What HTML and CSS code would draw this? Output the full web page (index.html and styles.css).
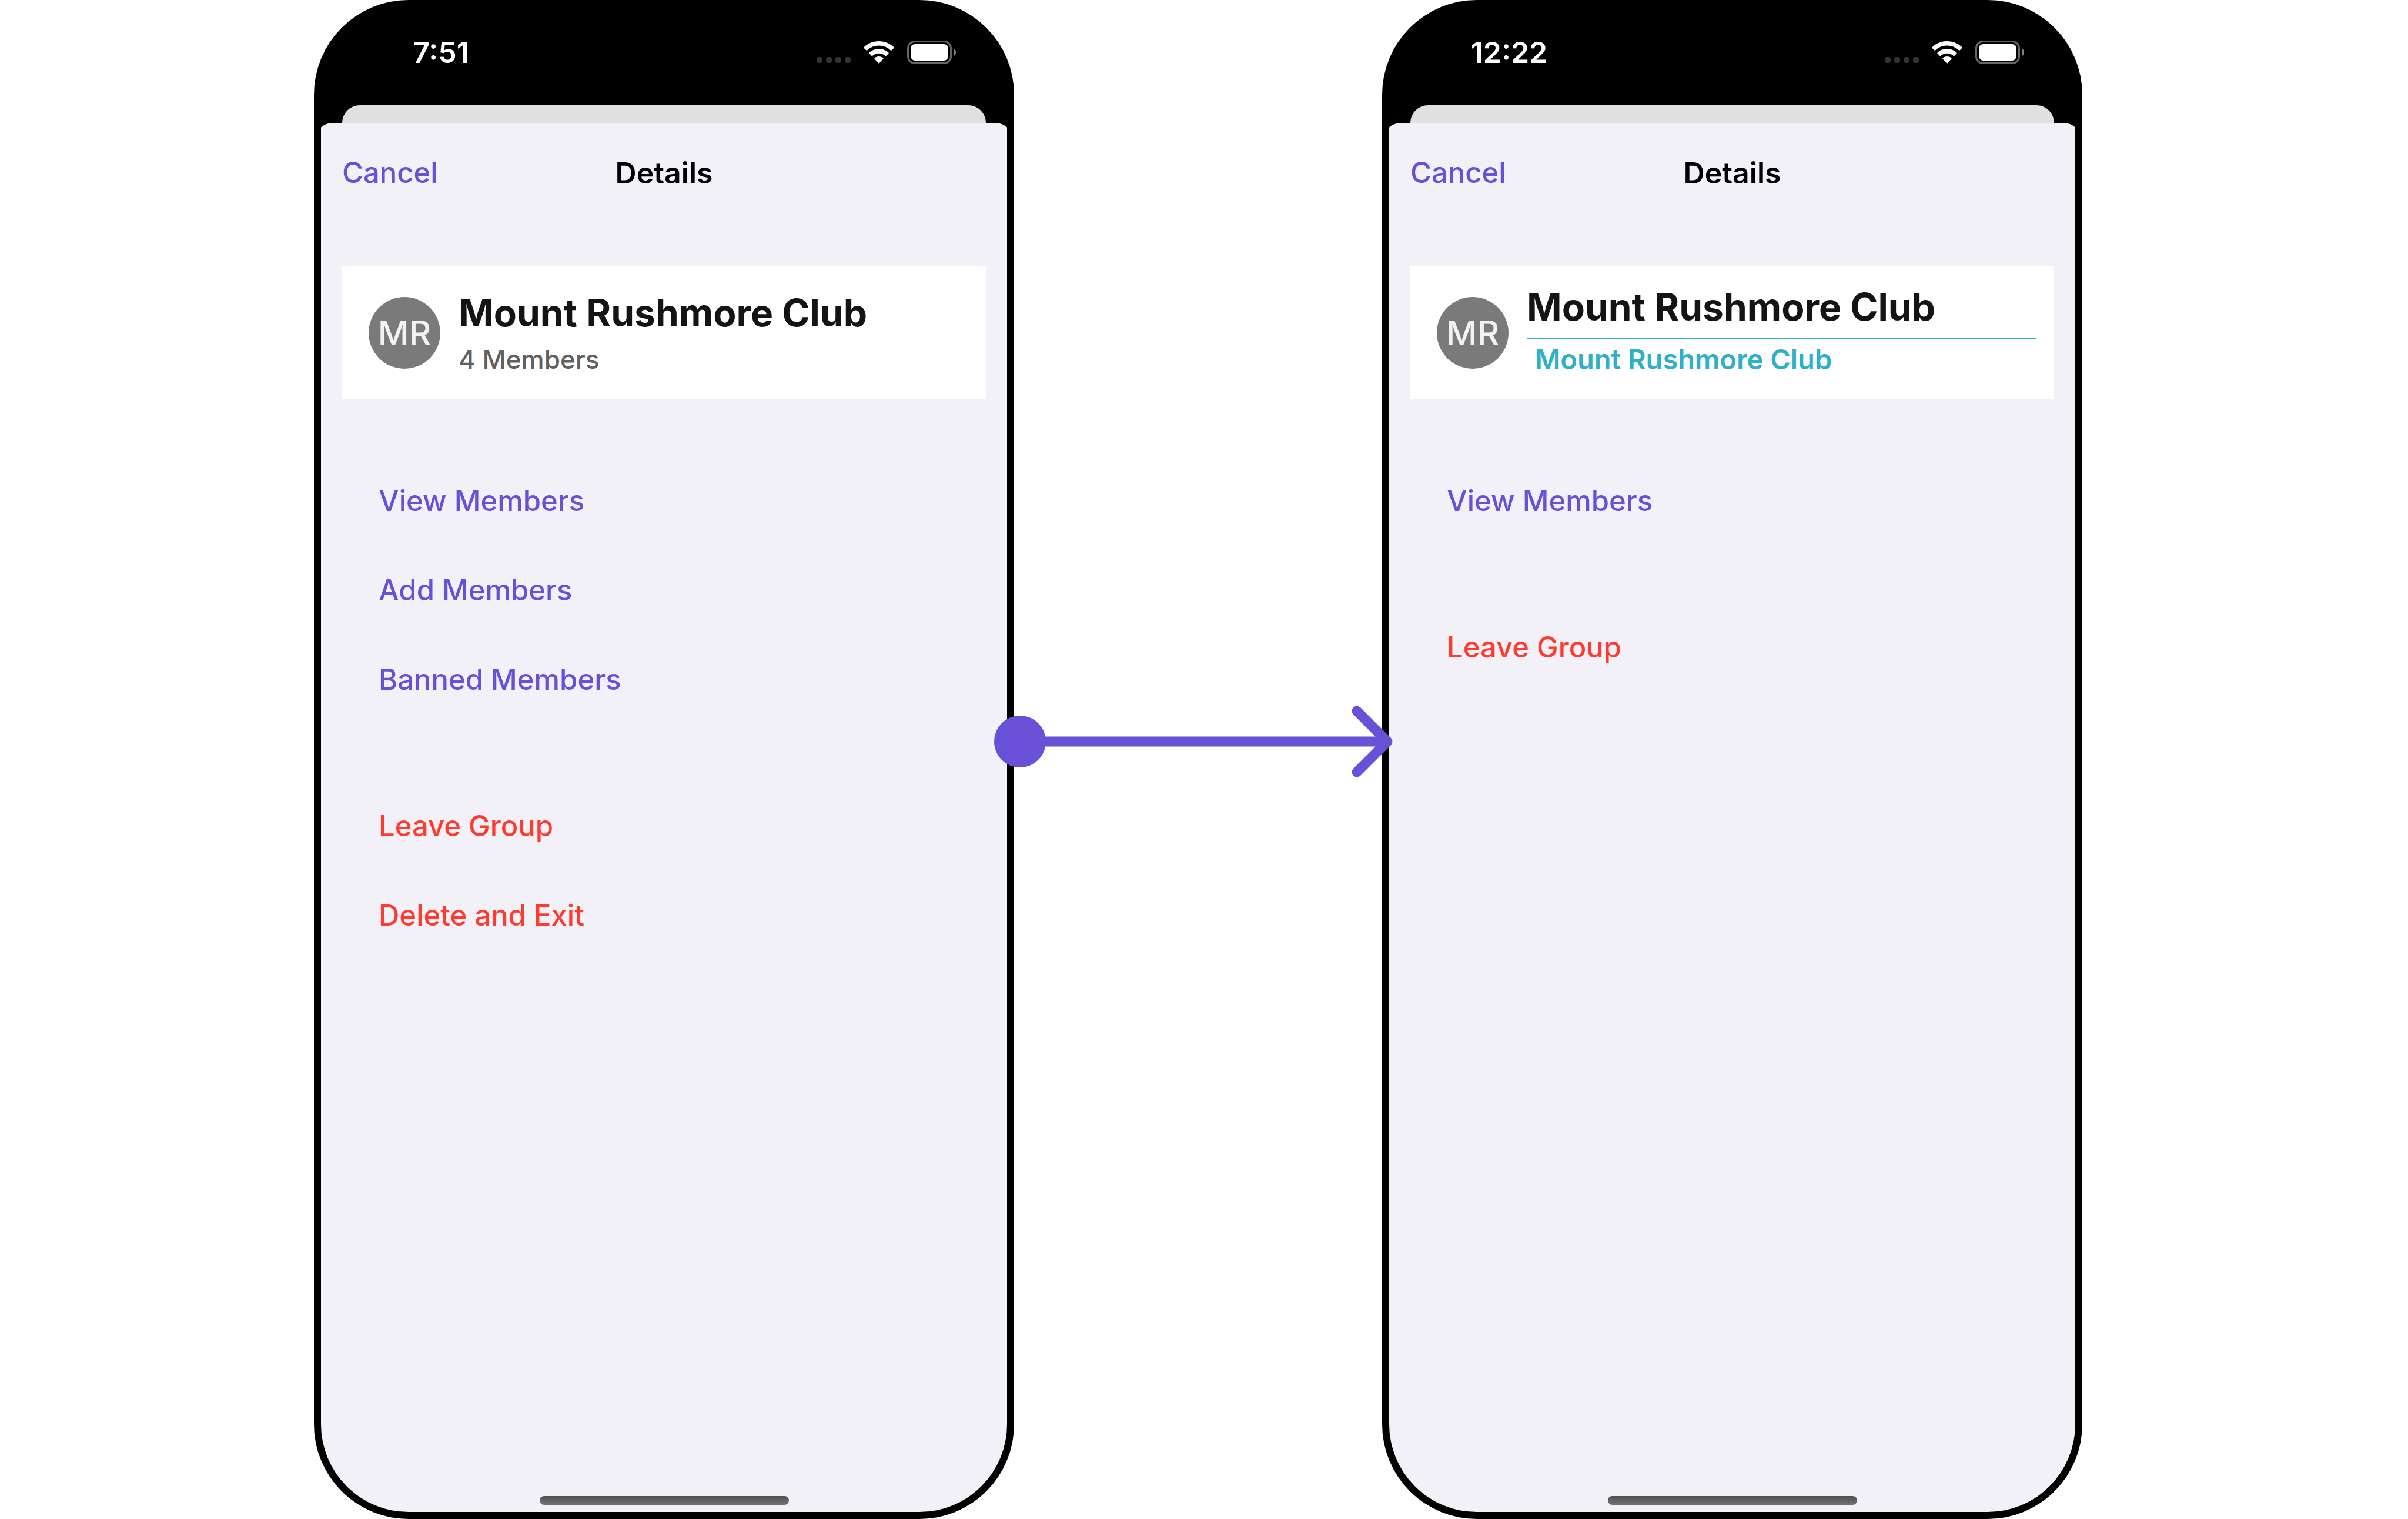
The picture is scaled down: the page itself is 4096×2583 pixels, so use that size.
FILE: index.html
```html
<!DOCTYPE html>
<html lang="en">
<head>
<meta charset="utf-8">
<meta name="viewport" content="width=device-width, initial-scale=1">
<title>Group details</title>
<link rel="stylesheet" href="styles.css">
</head>
<body>
<svg class="sprite" aria-hidden="true">
  <symbol id="wifi" viewBox="0 0 52 38">
    <path d="M26 0C36 0 45 4 51.400 10.200Q52 11 51.400 11.700L47.500 15.600Q46.800 16.200 46 15.500C40.600 10.400 33.600 7.500 26 7.500S11.400 10.400 6 15.500Q5.200 16.200 4.500 15.600L.6 11.700Q0 11 .6 10.200C7 4 16 0 26 0Z"/>
    <path d="M26 13C32.300 13 38.100 15.400 42.400 19.500Q43 20.200 42.400 20.900L38.300 25Q37.600 25.600 36.900 25C34 22.300 30.200 20.700 26 20.700S18 22.300 15.100 25Q14.400 25.600 13.700 25L9.600 20.900Q9 20.200 9.600 19.500C13.900 15.400 19.700 13 26 13Z"/>
    <path d="M26 26C28.800 26 31.400 27 33.400 28.800Q34 29.500 33.400 30.200L26.800 37.200Q26 38 25.200 37.200L18.600 30.200Q18 29.500 18.600 28.800C20.600 27 23.200 26 26 26Z"/>
  </symbol>
  <symbol id="battery" viewBox="0 0 84 40">
    <rect x="1.500" y="1.500" width="73" height="37" rx="11.500" fill="none" stroke="#666" stroke-width="3"/>
    <rect x="6" y="6" width="64" height="28" rx="7.500"/>
    <path d="M79 13.500C81.500 14.500 83 17 83 20S81.500 25.500 79 26.500Z" fill="#808080"/>
  </symbol>
</svg>

<main class="stage">
  <section class="phone phone-first" aria-label="Details before the role change">
    <div class="screen">
      <header class="status">
        <time class="clock">7:51</time>
        <div class="indicators">
          <span class="signal"><i></i><i></i><i></i><i></i></span>
          <svg class="wifi" aria-hidden="true"><use href="#wifi"/></svg>
          <svg class="battery" aria-hidden="true"><use href="#battery"/></svg>
        </div>
      </header>
      <div class="underlay"></div>
      <div class="sheet">
        <nav class="navbar">
          <button class="cancel" type="button">Cancel</button>
          <h1 class="title">Details</h1>
        </nav>
        <div class="card">
          <span class="avatar">MR</span>
          <div class="summary">
            <h2 class="name">Mount Rushmore Club</h2>
            <p class="count">4 Members</p>
          </div>
        </div>
        <div class="actions">
          <button class="action" type="button">View Members</button>
          <button class="action" type="button">Add Members</button>
          <button class="action" type="button">Banned Members</button>
        </div>
        <div class="actions">
          <button class="action danger" type="button">Leave Group</button>
          <button class="action danger" type="button">Delete and Exit</button>
        </div>
        <div class="home-indicator"></div>
      </div>
    </div>
  </section>

  <div class="link">
    <svg class="arrow" viewBox="0 0 680 124" aria-hidden="true">
      <circle cx="45" cy="62" r="44"/>
      <path d="M45 62H670M618 10L670 62L618 114" fill="none" stroke="currentColor" stroke-width="17" stroke-linecap="round" stroke-linejoin="round"/>
    </svg>
  </div>

  <section class="phone phone-second" aria-label="Details after the role change">
    <div class="screen">
      <header class="status">
        <time class="clock">12:22</time>
        <div class="indicators">
          <span class="signal"><i></i><i></i><i></i><i></i></span>
          <svg class="wifi" aria-hidden="true"><use href="#wifi"/></svg>
          <svg class="battery" aria-hidden="true"><use href="#battery"/></svg>
        </div>
      </header>
      <div class="underlay"></div>
      <div class="sheet">
        <nav class="navbar">
          <button class="cancel" type="button">Cancel</button>
          <h1 class="title">Details</h1>
        </nav>
        <div class="card">
          <span class="avatar">MR</span>
          <div class="summary summary-lined">
            <h2 class="name">Mount Rushmore Club</h2>
            <p class="alias">Mount Rushmore Club</p>
          </div>
        </div>
        <div class="actions">
          <button class="action" type="button">View Members</button>
        </div>
        <div class="actions">
          <button class="action danger" type="button">Leave Group</button>
        </div>
        <div class="home-indicator"></div>
      </div>
    </div>
  </section>
</main>
</body>
</html>
```
FILE: styles.css
```css
:root {
  --purple: #6851d6;
  --red: #ff3b30;
  --teal: #30b0c7;
  --sheet: #f2f1f7;
}

* {
  box-sizing: border-box;
}

body {
  margin: 0;
  background: #fff;
  font-family: Inter, "Liberation Sans", sans-serif;
  font-size: 50px;
  line-height: 60px;
}

h1,
h2,
p {
  margin: 0;
}

button {
  padding: 0;
  border: 0;
  background: none;
  color: var(--purple);
  font: inherit;
  font-size: 49px;
  font-weight: 500;
  text-align: left;
  cursor: pointer;
}

.sprite {
  display: none;
}

/* Two phones side by side, joined by the arrow in the middle column */
.stage {
  display: grid;
  grid-template-columns: 534fr 1191fr 626fr 1191fr 554fr;
  min-height: 100vh;
}

.phone {
  display: flex;
  padding: 0 12px 12px;
  border-radius: 161px;
  background: #000;
}

.phone-first {
  grid-column: 2;
}

.phone-second {
  grid-column: 4;
}

.screen {
  display: flex;
  flex: 1;
  flex-direction: column;
  overflow: hidden;
  border-radius: 149px;
}

.status {
  display: flex;
  align-items: center;
  justify-content: space-between;
  height: 179px;
  padding: 0 86px 2px 0;
  color: #fff;
}

.clock {
  width: 408px;
  font-weight: 600;
  text-align: center;
}

.indicators {
  display: flex;
  align-items: center;
  gap: 22px;
}

.signal {
  display: flex;
  align-self: flex-end;
  gap: 6px;
  padding-bottom: 2px;
}

.signal i {
  width: 10px;
  height: 10px;
  border-radius: 4px;
  background: #333;
}

.wifi {
  width: 52px;
  height: 38px;
  fill: #fff;
}

.battery {
  width: 84px;
  height: 40px;
  fill: #fff;
}

.underlay {
  height: 30px;
  margin: 0 36px;
  border-radius: 30px 30px 0 0;
  background: #e0e0e0;
}

/* The sheet is a little wider than the screen, which crops its corners */
.sheet {
  display: flex;
  flex: 1;
  flex-direction: column;
  margin: 0 -10px;
  padding: 0 46px 12px;
  border-radius: 30px 30px 0 0;
  background: var(--sheet);
}

.navbar {
  display: grid;
  grid-template-columns: 1fr auto 1fr;
  align-items: center;
  height: 170px;
  margin-bottom: 73px;
}

.cancel {
  justify-self: start;
}

.title {
  color: #000;
  font-size: 50px;
  font-weight: 600;
}

.card {
  display: flex;
  gap: 31px;
  min-height: 227px;
  padding: 0 31px 0 45px;
  background: #fff;
}

.avatar {
  display: flex;
  flex: none;
  align-items: center;
  align-self: center;
  justify-content: center;
  width: 122px;
  height: 122px;
  border-radius: 50%;
  background: #7a7a7a;
  color: #f2f2f2;
  font-size: 58px;
  font-weight: 500;
}

.summary {
  flex: 1;
  padding-top: 40px;
}

.name {
  color: #141414;
  font-size: 64px;
  font-weight: 700;
  line-height: 80px;
}

.count {
  color: #606060;
  font-size: 44px;
  font-weight: 500;
  line-height: 78px;
}

.summary-lined {
  padding-top: 30px;
}

.summary-lined .name {
  padding-bottom: 12px;
  border-bottom: 3px solid var(--teal);
}

.alias {
  padding-left: 14px;
  color: var(--teal);
  font-size: 47px;
  font-weight: 600;
  line-height: 68px;
}

.actions {
  display: flex;
  flex-direction: column;
  margin-top: 97px;
}

.action {
  height: 152px;
  padding-left: 62px;
}

.danger {
  color: var(--red);
}

.home-indicator {
  width: 424px;
  height: 15px;
  margin: auto auto 0;
  border-radius: 8px;
  background: linear-gradient(#505050, #747474);
}

.link {
  position: relative;
  grid-column: 3;
  grid-row: 1;
  z-index: 1;
}

/* Overlaps the edge of both phones */
.arrow {
  position: absolute;
  top: 46.4%;
  left: -35px;
  width: calc(100% + 54px);
  color: var(--purple);
  fill: currentColor;
}
```
